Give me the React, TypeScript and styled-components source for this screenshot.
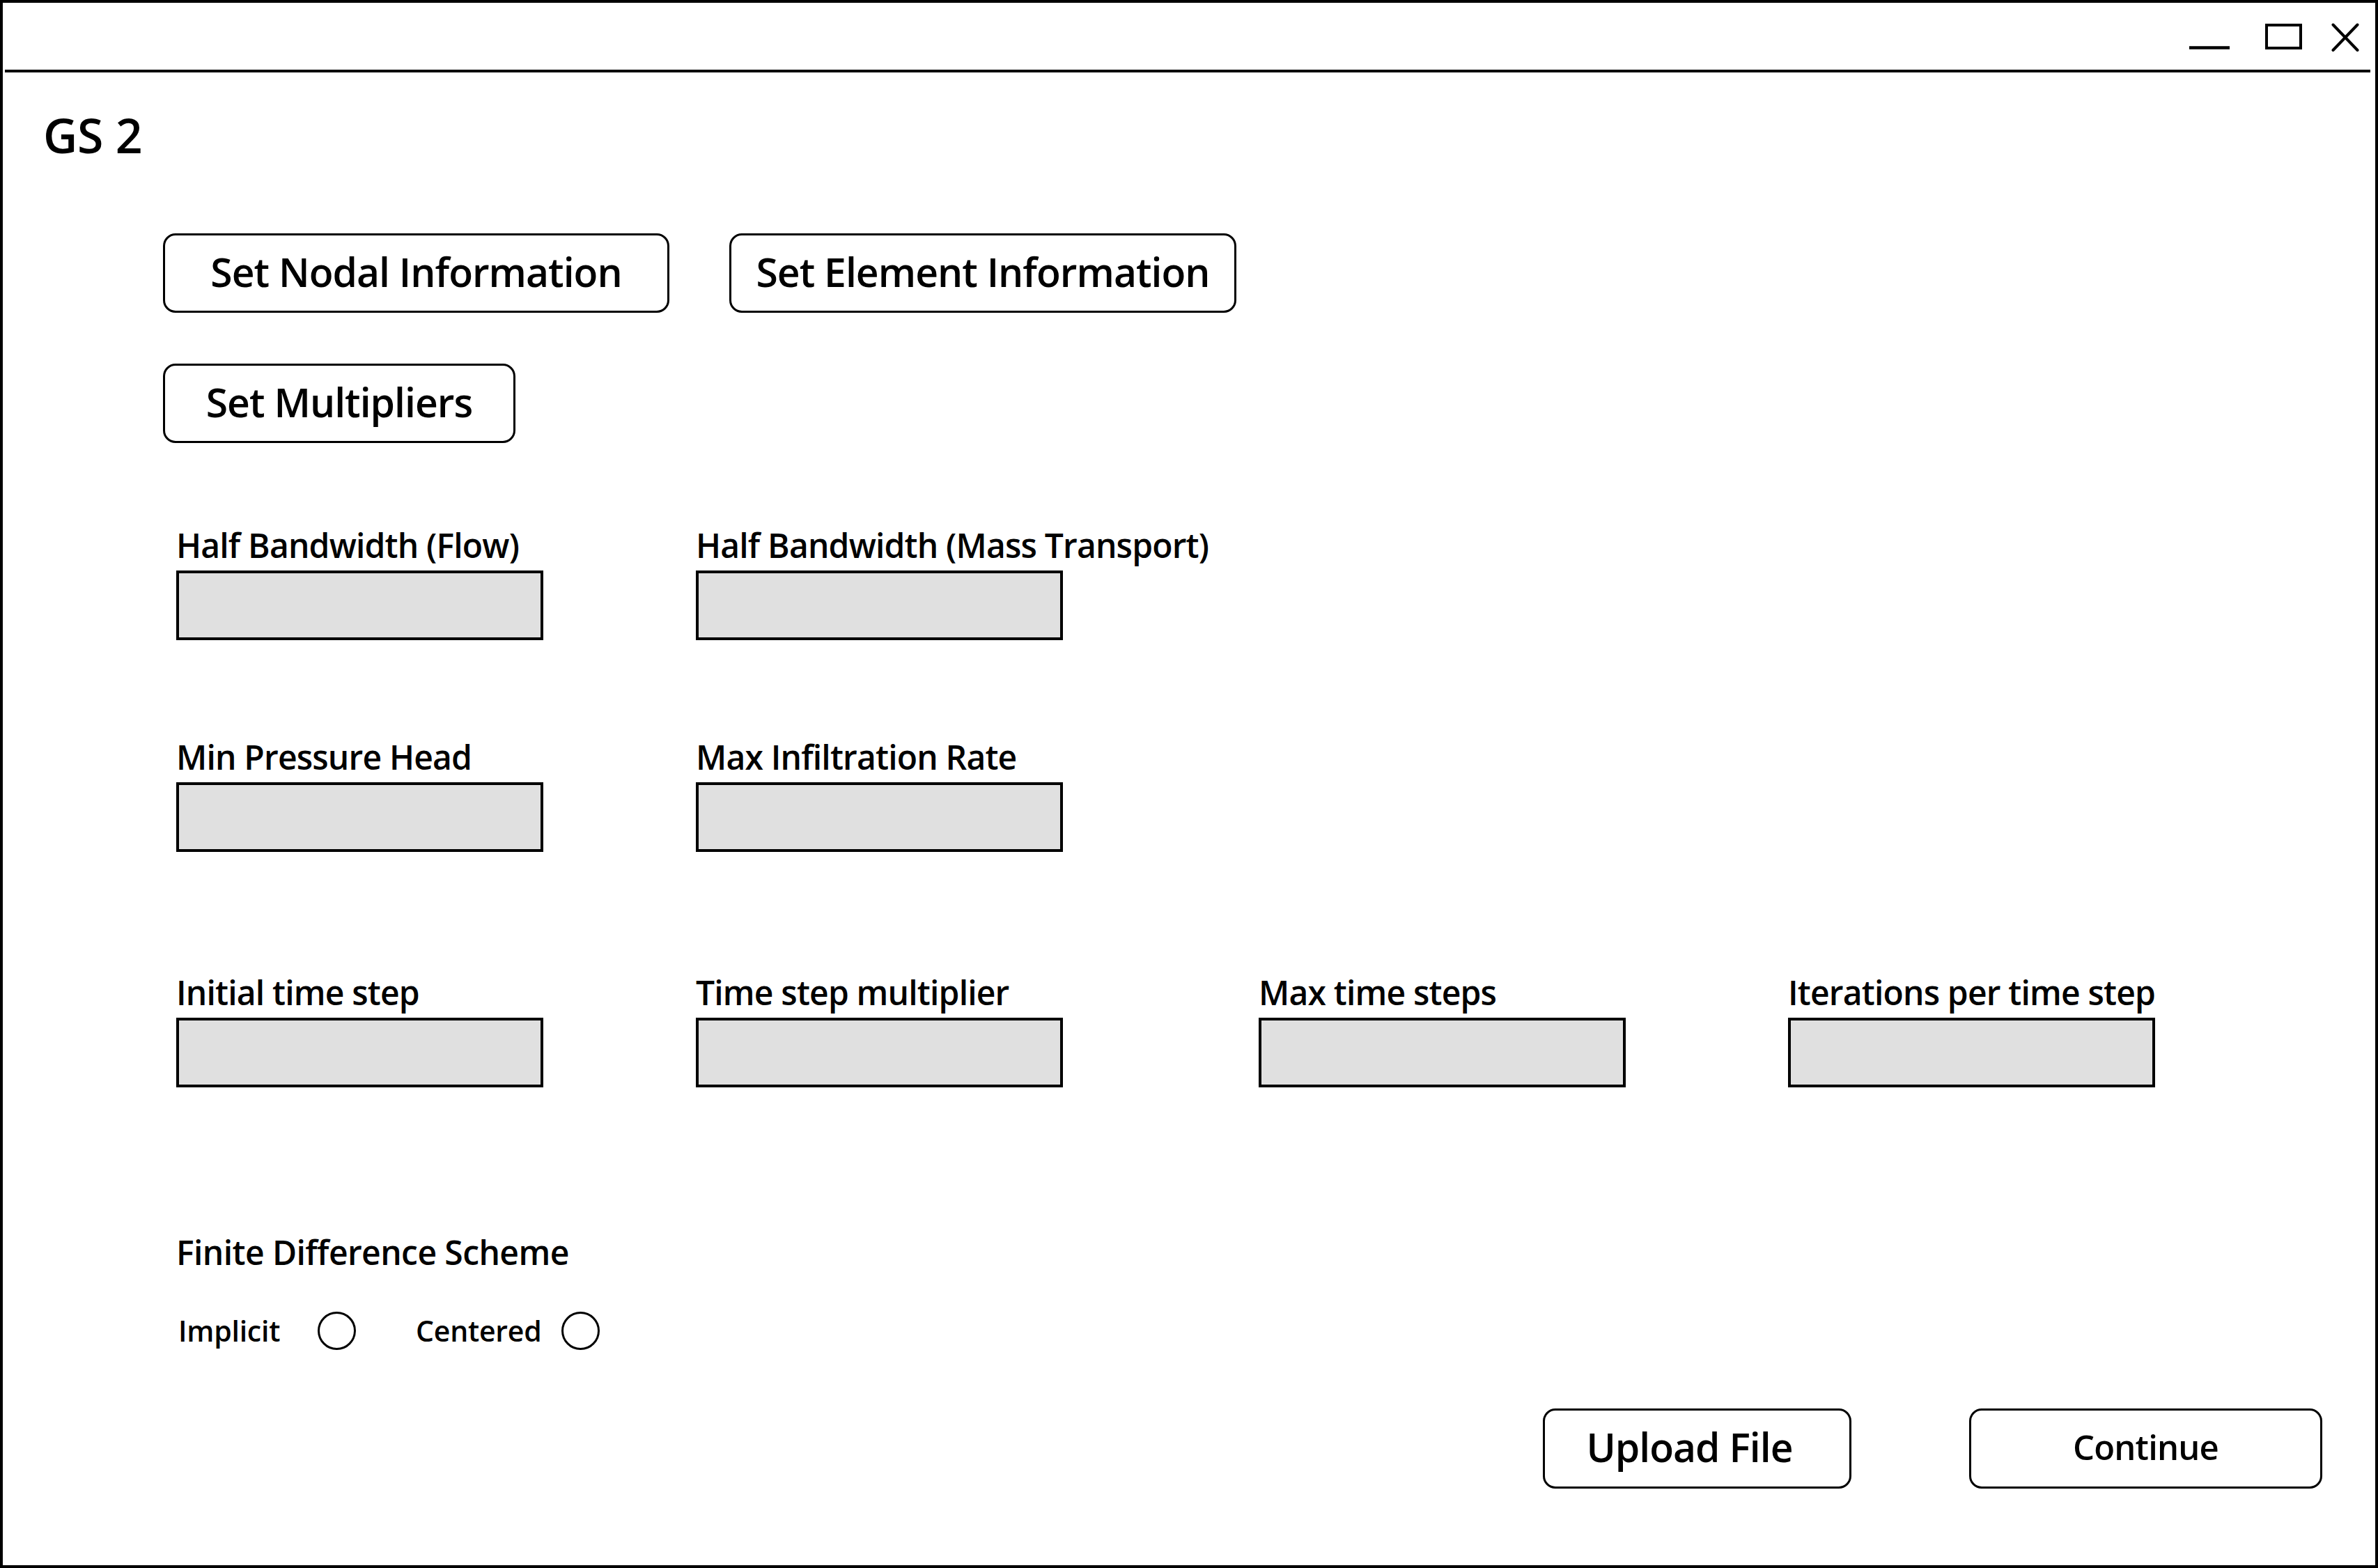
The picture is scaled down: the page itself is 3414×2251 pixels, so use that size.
import React from "react";
import styled, { createGlobalStyle } from "styled-components";

const GlobalStyle = createGlobalStyle`
  html, body {
    margin: 0;
    padding: 0;
    background: #ffffff;
  }
  body {
    font-family: "Open Sans", "Noto Sans", "Liberation Sans", sans-serif;
    color: #000000;
    letter-spacing: -0.015em;
  }
  * { box-sizing: border-box; }
`;

const Window = styled.div`
  width: 3414px;
  height: 2251px;
  border: 4px solid #000;
  display: flex;
  flex-direction: column;
  background: #fff;
`;

const TitleBar = styled.div`
  box-sizing: content-box;
  height: 96px;
  margin: 0 7px 0 3px;
  border-bottom: 4px solid #000;
  display: flex;
  justify-content: flex-end;
  align-items: flex-start;
  padding-right: 16px;
`;

const ControlButton = styled.button<{ $ml: number }>`
  margin-top: 29px;
  margin-left: ${(p) => p.$ml}px;
  padding: 0;
  border: none;
  background: transparent;
  display: flex;
  cursor: pointer;
`;

const Content = styled.div`
  display: flex;
  flex-direction: column;
  flex: 1;
`;

const Title = styled.h1`
  margin: 56px 0 0 58px;
  font-size: 68px;
  line-height: 68px;
  font-weight: 600;
`;

const ButtonGrid = styled.div`
  margin: 107px 0 0 230px;
  display: flex;
  flex-direction: column;
  gap: 73px;
`;

const ButtonRow = styled.div`
  display: flex;
  gap: 86px;
`;

const ActionButton = styled.button<{ $w: number; $fs?: number; $h?: number; $pr?: number }>`
  width: ${(p) => p.$w}px;
  height: ${(p) => p.$h ?? 114}px;
  border: 3px solid #000;
  border-radius: 18px;
  background: #fff;
  color: #000;
  font-family: "Open Sans", "Noto Sans", sans-serif;
  font-size: ${(p) => p.$fs ?? 57}px;
  font-weight: 600;
  letter-spacing: -0.017em;
  line-height: 1;
  display: flex;
  align-items: center;
  justify-content: center;
  padding: 0 ${(p) => p.$pr ?? 0}px 4px 0;
  cursor: pointer;
`;

const Fields = styled.div`
  margin-left: 249px;
  display: flex;
  flex-direction: column;
`;

const FieldRow = styled.div<{ $mt: number }>`
  margin-top: ${(p) => p.$mt}px;
  display: grid;
  grid-template-columns: 746px 808px 760px 527px;
`;

const Field = styled.label`
  display: flex;
  flex-direction: column;
  gap: 12px;
`;

const Label = styled.span`
  font-size: 48px;
  line-height: 48px;
  font-weight: 600;
  letter-spacing: -0.017em;
  white-space: nowrap;
`;

const TextInput = styled.input`
  width: 527px;
  height: 100px;
  border: 4px solid #000;
  background: #e0e0e0;
  font-size: 40px;
  padding: 0 12px;
  outline: none;
`;

const SchemeLabel = styled.div`
  margin-top: 213px;
  font-size: 48px;
  line-height: 48px;
  font-weight: 600;
  letter-spacing: -0.012em;
`;

const RadioRow = styled.div`
  margin-top: 61px;
  display: flex;
  align-items: center;
  gap: 83px;
`;

const RadioOption = styled.label`
  display: flex;
  align-items: center;
`;

const RadioText = styled.span<{ $w: number }>`
  width: ${(p) => p.$w}px;
  font-size: 41px;
  line-height: 41px;
  font-weight: 600;
  padding-left: 3px;
`;

const Radio = styled.input`
  appearance: none;
  -webkit-appearance: none;
  margin: 0;
  width: 55px;
  height: 55px;
  border: 3.5px solid #000;
  border-radius: 50%;
  background: #fff;
  cursor: pointer;
  &:checked {
    background: radial-gradient(circle, #000 0 35%, #fff 36%);
  }
`;

const BottomBar = styled.div`
  margin-top: 84px;
  display: flex;
  justify-content: flex-end;
  gap: 169px;
  padding-right: 76px;
`;

const MinimizeIcon = () => (
  <svg width="58" height="42" viewBox="0 0 58 42">
    <line x1="0" y1="35.5" x2="58" y2="35.5" stroke="#000" strokeWidth="4.5" />
  </svg>
);

const MaximizeIcon = () => (
  <svg width="53" height="42" viewBox="0 0 53 42">
    <rect x="2" y="3" width="49" height="33" fill="none" stroke="#000" strokeWidth="4" />
  </svg>
);

const CloseIcon = () => (
  <svg width="40" height="42" viewBox="0 0 40 42">
    <line x1="2.5" y1="2.5" x2="37.5" y2="39" stroke="#000" strokeWidth="4" strokeLinecap="round" />
    <line x1="37.5" y1="2.5" x2="2.5" y2="39" stroke="#000" strokeWidth="4" strokeLinecap="round" />
  </svg>
);

export default function App() {
  return (
    <>
      <GlobalStyle />
      <Window>
        <TitleBar>
          <ControlButton $ml={0} aria-label="Minimize">
            <MinimizeIcon />
          </ControlButton>
          <ControlButton $ml={51} aria-label="Maximize">
            <MaximizeIcon />
          </ControlButton>
          <ControlButton $ml={42} aria-label="Close">
            <CloseIcon />
          </ControlButton>
        </TitleBar>
        <Content>
          <Title>GS 2</Title>
          <ButtonGrid>
            <ButtonRow>
              <ActionButton $w={727}>Set Nodal Information</ActionButton>
              <ActionButton $w={728}>Set Element Information</ActionButton>
            </ButtonRow>
            <ButtonRow>
              <ActionButton $w={506}>Set Multipliers</ActionButton>
            </ButtonRow>
          </ButtonGrid>
          <Fields>
            <FieldRow $mt={123}>
              <Field>
                <Label>Half Bandwidth (Flow)</Label>
                <TextInput />
              </Field>
              <Field>
                <Label>Half Bandwidth (Mass Transport)</Label>
                <TextInput />
              </Field>
            </FieldRow>
            <FieldRow $mt={144}>
              <Field>
                <Label>Min Pressure Head</Label>
                <TextInput />
              </Field>
              <Field>
                <Label>Max Infiltration Rate</Label>
                <TextInput />
              </Field>
            </FieldRow>
            <FieldRow $mt={178}>
              <Field>
                <Label>Initial time step</Label>
                <TextInput />
              </Field>
              <Field>
                <Label>Time step multiplier</Label>
                <TextInput />
              </Field>
              <Field>
                <Label>Max time steps</Label>
                <TextInput />
              </Field>
              <Field>
                <Label>Iterations per time step</Label>
                <TextInput />
              </Field>
            </FieldRow>
            <SchemeLabel>Finite Difference Scheme</SchemeLabel>
            <RadioRow>
              <RadioOption>
                <RadioText $w={203}>Implicit</RadioText>
                <Radio type="radio" name="scheme" />
              </RadioOption>
              <RadioOption>
                <RadioText $w={212}>Centered</RadioText>
                <Radio type="radio" name="scheme" />
              </RadioOption>
            </RadioRow>
          </Fields>
          <BottomBar>
            <ActionButton $w={443} $h={115} $pr={22}>Upload File</ActionButton>
            <ActionButton $w={507} $h={115} $fs={49}>Continue</ActionButton>
          </BottomBar>
        </Content>
      </Window>
    </>
  );
}
